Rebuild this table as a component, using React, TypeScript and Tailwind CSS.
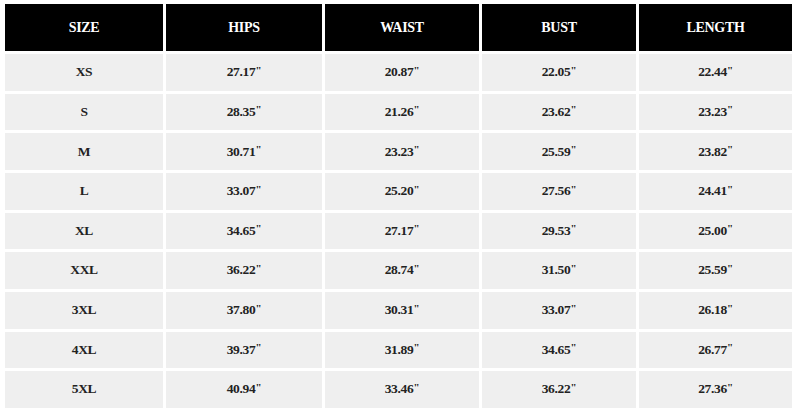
import React from "react";

const headers = ["SIZE", "HIPS", "WAIST", "BUST", "LENGTH"];
const rows: string[][] = [
  ["XS", "27.17", "20.87", "22.05", "22.44"],
  ["S", "28.35", "21.26", "23.62", "23.23"],
  ["M", "30.71", "23.23", "25.59", "23.82"],
  ["L", "33.07", "25.20", "27.56", "24.41"],
  ["XL", "34.65", "27.17", "29.53", "25.00"],
  ["XXL", "36.22", "28.74", "31.50", "25.59"],
  ["3XL", "37.80", "30.31", "33.07", "26.18"],
  ["4XL", "39.37", "31.89", "34.65", "26.77"],
  ["5XL", "40.94", "33.46", "36.22", "27.36"],
];

export default function App() {
  return (
    <div
      className="w-[797px] h-[412px] bg-white pt-[4px] pl-[5px]"
      style={{ fontFamily: '"Liberation Serif", "DejaVu Serif", serif' }}
    >
      <div className="grid grid-cols-[158px_156px_154px_154px_153px] grid-rows-[47px_repeat(9,36.67px)] gap-[3px]">
        {headers.map((h) => (
          <div
            key={h}
            className="bg-black text-white font-bold text-[14px] tracking-[-0.3px] flex items-center justify-center"
          >
            {h}
          </div>
        ))}
        {rows.map((r) =>
          r.map((c, i) => (
            <div
              key={r[0] + i}
              className="bg-[#efefef] text-[#222] font-bold text-[13.5px] tracking-[-0.3px] flex items-center justify-center"
            >
              {c}
              {i > 0 && <span className="font-bold text-[11px] leading-none relative -top-[2px]">"</span>}
            </div>
          ))
        )}
      </div>
    </div>
  );
}
